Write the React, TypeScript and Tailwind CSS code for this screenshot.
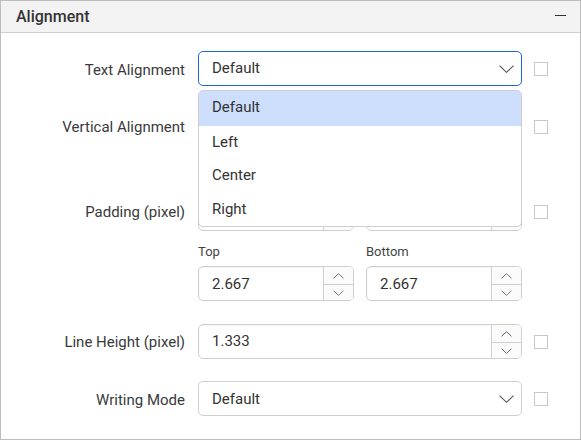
const font = "font-['Roboto',sans-serif]";

function Chevron({ up = false, w = 11, h = 5, color = "#7d7d7d", sw = 1 }: { up?: boolean; w?: number; h?: number; color?: string; sw?: number }) {
  return (
    <svg width={w} height={h + 1} viewBox={`0 0 ${w} ${h + 1}`} fill="none" className="block">
      <path d={up ? `M0.5 ${h + 0.3} L${w / 2} 0.7 L${w - 0.5} ${h + 0.3}` : `M0.5 0.7 L${w / 2} ${h + 0.3} L${w - 0.5} 0.7`} stroke={color} strokeWidth={sw} />
    </svg>
  );
}

function Check() {
  return <div className="w-[12px] h-[12px] box-content border border-[#c8c8c8] shrink-0 -mx-px" />;
}

function Select({ value, focused = false, covered = false, low = false }: { value: string; focused?: boolean; covered?: boolean; low?: boolean }) {
  return (
    <div className={`h-[35px] w-[324px] rounded-[5px] border flex items-center justify-between pl-[13px] pr-[7px] bg-white ${focused ? "border-[#1a66d6]" : "border-[#cfcfcf]"}`}>
      <span className={`text-[15px] text-[#333] ${low ? "mt-[1px]" : "-mt-[1px]"} ${covered ? "invisible" : ""}`}>{value}</span>
      <Chevron w={15} h={7} color="#555" sw={1.1} />
    </div>
  );
}

function Spinner({ value, wide = false, color = "#7d7d7d", covered = false }: { value: string; wide?: boolean; color?: string; covered?: boolean }) {
  return (
    <div className={`h-[35px] ${wide ? "w-[324px]" : "w-[156px]"} rounded-[5px] border border-[#cfcfcf] flex bg-white overflow-hidden`}>
      <div className="flex-1 flex items-center pl-[13px] text-[15px] text-[#333] shadow-[inset_0_1px_2px_rgba(0,0,0,0.05)]">
        <span className={`${wide ? "-mt-[1px]" : "mt-[1px]"} ${covered ? "invisible" : ""}`}>{value}</span>
      </div>
      <div className="w-[30px] border-l border-[#cfcfcf] flex flex-col bg-[#fbfbfb]">
        <div className="h-[18px] flex items-center justify-center border-b border-[#cfcfcf]">
          <Chevron up color={color} />
        </div>
        <div className="flex-1 flex items-center justify-center">
          <Chevron color={color} />
        </div>
      </div>
    </div>
  );
}

function Label({ children, low = false }: { children: React.ReactNode; low?: boolean }) {
  return <div className={`w-[184px] ${low ? "pt-[4px]" : "pt-[2px]"} text-right text-[15px] text-[#3a3a3a]`}>{children}</div>;
}

function Row({ label, children, className = "", low = false }: { label: string; children: React.ReactNode; className?: string; low?: boolean }) {
  return (
    <div className={`flex items-center ${className}`}>
      <Label low={low}>{label}</Label>
      <div className="ml-[13px] w-[324px]">{children}</div>
      <div className="ml-[13px]">
        <Check />
      </div>
    </div>
  );
}

function Small({ label, value, covered = false }: { label: string; value: string; covered?: boolean }) {
  return (
    <div className="w-[156px]">
      <div className={`h-[14px] mb-[7px] flex items-center text-[13px] text-[#444] ${covered ? "invisible" : ""}`}>{label}</div>
      <Spinner value={value} covered={covered} />
    </div>
  );
}

export default function App() {
  return (
    <div className={`${font} w-[581px] h-[440px] border border-[#bdbdbd] bg-white relative overflow-hidden`}>
      <div className="h-[31px] bg-[#f3f3f3] border-b border-[#cfcfcf] box-content flex items-center justify-between pl-[15px] pr-[14px]">
        <span className="text-[16px] font-medium text-[#333] mt-[1px]">Alignment</span>
        <div className="w-[11px] h-[1px] bg-[#333] -mt-[3px]" />
      </div>
      <div className="pt-[18px]">
        <Row label="Text Alignment" low>
          <Select value="Default" focused />
        </Row>
        <Row label="Vertical Alignment" className="mt-[23px]">
          <Select value="Default" covered />
        </Row>
        <div className="flex items-start mt-[31px]">
          <div className="mt-[19px] h-[35px] flex items-center">
            <Label>Padding (pixel)</Label>
          </div>
          <div className="ml-[13px] w-[324px] flex flex-col gap-[14px]">
            <div className="flex justify-between">
              <Small label="Left" value="2.667" covered />
              <Small label="Right" value="2.667" covered />
            </div>
            <div className="flex justify-between">
              <Small label="Top" value="2.667" />
              <Small label="Bottom" value="2.667" />
            </div>
          </div>
          <div className="ml-[13px] mt-[19px] h-[35px] flex items-center">
            <Check />
          </div>
        </div>
        <Row label="Line Height (pixel)" className="mt-[23px]">
          <Spinner value="1.333" wide color="#5f6b7a" />
        </Row>
        <Row label="Writing Mode" className="mt-[22px]" low>
          <Select value="Default" low />
        </Row>
      </div>
      <div className="absolute left-[197px] top-[89px] w-[324px] h-[137px] bg-white border border-[#cfcfcf] rounded-[5px] overflow-hidden text-[15px] text-[#333]">
        <div className="h-[35px] bg-[#cddffd] flex items-center pl-[13px] pb-[2px]">Default</div>
        <div className="h-[34px] flex items-center pl-[13px] pb-[2px]">Left</div>
        <div className="h-[33px] flex items-center pl-[13px] pb-[2px]">Center</div>
        <div className="h-[34px] flex items-center pl-[13px] pb-[2px]">Right</div>
      </div>
    </div>
  );
}
